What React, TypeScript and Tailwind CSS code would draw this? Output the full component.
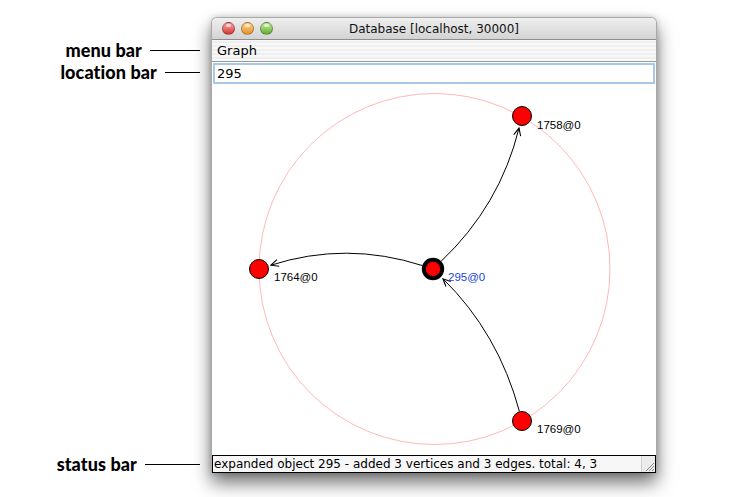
import React from "react";

type Pt = { x: number; y: number };

const N295: Pt = { x: 433, y: 269 };
const N1758: Pt = { x: 522, y: 116 };
const N1764: Pt = { x: 259, y: 269 };
const N1769: Pt = { x: 522, y: 421 };

function unit(x: number, y: number) {
  const l = Math.hypot(x, y) || 1;
  return { x: x / l, y: y / l };
}

function edgePath(s: Pt, t: Pt, d: number, rs: number, rt: number) {
  const u = unit(t.x - s.x, t.y - s.y);
  const px = -u.y;
  const py = u.x;
  const cx = (s.x + t.x) / 2 + px * d;
  const cy = (s.y + t.y) / 2 + py * d;
  const a = unit(cx - s.x, cy - s.y);
  const b = unit(cx - t.x, cy - t.y);
  const sx = s.x + a.x * rs;
  const sy = s.y + a.y * rs;
  const ex = t.x + b.x * rt;
  const ey = t.y + b.y * rt;
  return `M${sx.toFixed(1)} ${sy.toFixed(1)} Q${cx.toFixed(1)} ${cy.toFixed(1)} ${ex.toFixed(1)} ${ey.toFixed(1)}`;
}

function Annotation({ label, line, h }: { label: string; line: string; h: string }) {
  return (
    <div className={`${h} flex items-center justify-end pr-[11px]`}>
      <span className="font-['Lato',sans-serif] font-black text-[18px] leading-none text-black tracking-[0.1px]">
        {label}
      </span>
      <span className={`${line} h-px bg-black ml-[8px]`} />
    </div>
  );
}

function Light({ from, to }: { from: string; to: string }) {
  return (
    <span
      className={`w-[13px] h-[13px] rounded-full border border-black/30 bg-gradient-to-b ${from} ${to} relative`}
    >
      <span className="absolute left-[3px] top-[1px] w-[5px] h-[3px] rounded-full bg-white/60" />
    </span>
  );
}

function Graph() {
  return (
    <svg className="w-[444px] h-[371px] block" viewBox="212 84 444 371">
      <defs>
        <marker
          id="arr"
          markerUnits="userSpaceOnUse"
          markerWidth="10"
          markerHeight="10"
          refX="9"
          refY="5"
          orient="auto"
        >
          <path d="M1.5 1.5 L9 5 L1.5 8.5" fill="none" stroke="#000" strokeWidth="1.1" />
        </marker>
      </defs>
      <circle cx="434.5" cy="269" r="175.5" fill="none" stroke="#ffb8b8" strokeWidth="1" />
      <path d={edgePath(N295, N1758, 26, 11, 12.5)} fill="none" stroke="#000" strokeWidth="1" markerEnd="url(#arr)" />
      <path d={edgePath(N295, N1764, 28, 11, 12.5)} fill="none" stroke="#000" strokeWidth="1" markerEnd="url(#arr)" />
      <path d={edgePath(N1769, N295, 24, 10, 14)} fill="none" stroke="#000" strokeWidth="1" markerEnd="url(#arr)" />
      <g className="font-['Liberation_Sans',Arial,sans-serif]" fontSize="11.5">
        <circle cx={N1758.x} cy={N1758.y} r="9.5" fill="#ff0000" stroke="#000" strokeWidth="1" />
        <text x={N1758.x + 15} y={N1758.y + 13} fill="#000">1758@0</text>
        <circle cx={N1764.x} cy={N1764.y} r="9.5" fill="#ff0000" stroke="#000" strokeWidth="1" />
        <text x={N1764.x + 15} y={N1764.y + 12} fill="#000">1764@0</text>
        <circle cx={N1769.x} cy={N1769.y} r="9.5" fill="#ff0000" stroke="#000" strokeWidth="1" />
        <text x={N1769.x + 15} y={N1769.y + 12} fill="#000">1769@0</text>
        <circle cx={N295.x} cy={N295.y} r="9.2" fill="#ff0000" stroke="#000" strokeWidth="4" />
        <text x={N295.x + 15} y={N295.y + 12} fill="#2244dd">295@0</text>
      </g>
    </svg>
  );
}

export default function App() {
  return (
    <div className="w-[750px] h-[497px] bg-white flex overflow-hidden font-['DejaVu_Sans',sans-serif]">
      {/* annotations */}
      <div className="w-[211px] flex flex-col pt-[39px] pb-[24px]">
        <Annotation label="menu bar" line="w-[50px]" h="h-[22px]" />
        <Annotation label="location bar" line="w-[35px]" h="h-[22px]" />
        <div className="flex-1" />
        <Annotation label="status bar" line="w-[55px]" h="h-[18px]" />
      </div>

      {/* window */}
      <div className="mt-[17px] w-[446px] h-[456px] flex flex-col rounded-t-[6px] border-x border-t border-[#a9a9a9] bg-white shadow-[0_10px_18px_rgba(0,0,0,0.55),0_0_6px_rgba(0,0,0,0.18)]">
        {/* title bar */}
        <div className="h-[22px] shrink-0 flex items-center rounded-t-[5px] bg-gradient-to-b from-[#efefef] to-[#d3d3d3] border-b border-[#8e8e8e] relative">
          <div className="flex items-center gap-[6px] pl-[10px]">
            <Light from="from-[#f7a0a0]" to="to-[#d6332e]" />
            <Light from="from-[#fbd38c]" to="to-[#e8901a]" />
            <Light from="from-[#c6eb9a]" to="to-[#5fae2f]" />
          </div>
          <div className="absolute inset-0 flex items-center justify-center text-[12px] text-[#111] leading-none pt-[1px]">
            Database [localhost, 30000]
          </div>
        </div>

        {/* menu bar */}
        <div className="h-[22px] shrink-0 flex items-center px-[5px] text-[13px] text-black border-b border-[#9a9a9a] bg-[repeating-linear-gradient(0deg,#f8f8f8_0px,#f8f8f8_2px,#efefef_2px,#efefef_4px)]">
          Graph
        </div>

        {/* location bar */}
        <div className="h-[22px] shrink-0 px-[1px] pt-[1px]">
          <div className="h-[21px] border-2 border-[#a7c8e8] flex items-center px-[2px] text-[13px] text-black bg-white">
            295
          </div>
        </div>

        {/* canvas */}
        <div className="flex-1 bg-white overflow-hidden">
          <Graph />
        </div>

        {/* status bar */}
        <div className="h-[18px] shrink-0 flex border border-black bg-[#f7f7f7]">
          <div className="flex-1 flex items-center pl-[1px] text-[12px] leading-none text-black whitespace-nowrap">
            expanded object 295 - added 3 vertices and 3 edges. total: 4, 3
          </div>
          <div className="w-[14px] h-full bg-[#ececec] border-l border-[#d0d0d0] flex items-end justify-end">
            <svg width="12" height="12" viewBox="0 0 12 12">
              <path d="M11 3 L3 11 M11 6 L6 11 M11 9 L9 11" stroke="#8a8a8a" strokeWidth="1" />
            </svg>
          </div>
        </div>
      </div>
    </div>
  );
}
